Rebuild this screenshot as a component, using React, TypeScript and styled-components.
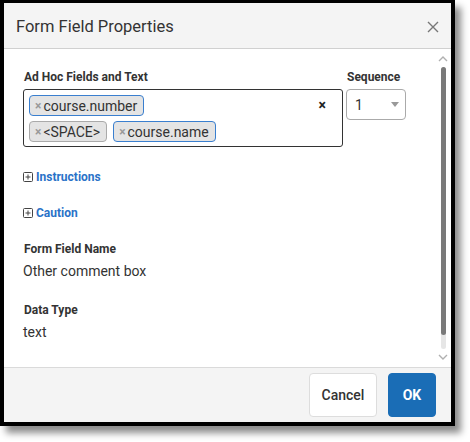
import React from 'react';
import styled, { createGlobalStyle } from 'styled-components';

const GlobalStyle = createGlobalStyle`
  html, body {
    margin: 0;
    padding: 0;
    background: #ffffff;
  }
  body {
    font-family: Roboto, "Liberation Sans", Arial, sans-serif;
    color: #333333;
  }
  * {
    box-sizing: border-box;
  }
`;

type Chip = { label: string; field: boolean };

const chipRows: Chip[][] = [
  [{ label: 'course.number', field: true }],
  [
    { label: '<SPACE>', field: false },
    { label: 'course.name', field: true },
  ],
];

const App: React.FC = () => {
  return (
    <>
      <GlobalStyle />
      <Page>
        <Dialog>
          <Header>
            <Title>Form Field Properties</Title>
            <CloseButton aria-label="Close">
              <svg width="12" height="12" viewBox="0 0 12 12">
                <path d="M1 1 L11 11 M11 1 L1 11" stroke="#777" strokeWidth="1.4" fill="none" />
              </svg>
            </CloseButton>
          </Header>

          <Body>
            <FieldRow>
              <FieldGroup $grow>
                <Label>Ad Hoc Fields and Text</Label>
                <TagInput>
                  {chipRows.map((row, i) => (
                    <ChipRow key={i}>
                      {row.map((chip) => (
                        <ChipItem key={chip.label} $field={chip.field}>
                          <ChipRemove>×</ChipRemove>
                          {chip.label}
                        </ChipItem>
                      ))}
                    </ChipRow>
                  ))}
                  <ClearAll>×</ClearAll>
                </TagInput>
              </FieldGroup>

              <FieldGroup>
                <Label>Sequence</Label>
                <Select>
                  <span>1</span>
                  <Caret />
                </Select>
              </FieldGroup>
            </FieldRow>

            <Toggle $top={23}>
              <PlusBox />
              Instructions
            </Toggle>
            <Toggle $top={22}>
              <PlusBox />
              Caution
            </Toggle>

            <Detail $top={22}>
              <Label>Form Field Name</Label>
              <Value>Other comment box</Value>
            </Detail>
            <Detail $top={24}>
              <Label>Data Type</Label>
              <Value>text</Value>
            </Detail>

            <ScrollBar>
              <Chevron viewBox="0 0 10 6">
                <path d="M1 5 L5 1 L9 5" />
              </Chevron>
              <Track>
                <Thumb />
              </Track>
              <Chevron viewBox="0 0 10 6">
                <path d="M1 1 L5 5 L9 1" />
              </Chevron>
            </ScrollBar>
          </Body>

          <Footer>
            <CancelButton>Cancel</CancelButton>
            <OkButton>OK</OkButton>
          </Footer>
        </Dialog>
      </Page>
    </>
  );
};

const PlusBox: React.FC = () => (
  <svg width="10" height="10" viewBox="0 0 10 10">
    <rect x="0.5" y="0.5" width="9" height="9" rx="1" fill="none" stroke="#444" strokeWidth="1" />
    <path d="M2.5 5 H7.5 M5 2.5 V7.5" stroke="#444" strokeWidth="1" />
  </svg>
);

// Styled Components
const Page = styled.div`
  width: 470px;
  height: 442px;
`;

const Dialog = styled.div`
  width: 455px;
  height: 426px;
  display: flex;
  flex-direction: column;
  border-style: solid;
  border-color: #000;
  border-width: 3px 4px 4px 4px;
  background: #ffffff;
  box-shadow: 6px 7px 7px rgba(0, 0, 0, 0.45);
`;

const Header = styled.div`
  height: 46px;
  flex-shrink: 0;
  display: flex;
  align-items: center;
  justify-content: space-between;
  padding: 1px 12px 0 12px;
  background: #f4f4f4;
  border-bottom: 1px solid #d0d0d0;
`;

const Title = styled.h1`
  margin: 0;
  font-size: 16.5px;
  font-weight: 400;
  color: #333;
`;

const CloseButton = styled.button`
  border: none;
  background: none;
  padding: 0;
  width: 12px;
  height: 12px;
  display: flex;
  margin-top: 1px;
`;

const Body = styled.div`
  position: relative;
  flex: 1;
  padding: 21px 45px 0 19px;
  overflow: hidden;
`;

const FieldRow = styled.div`
  display: flex;
  gap: 3px;
`;

const FieldGroup = styled.div<{ $grow?: boolean }>`
  display: flex;
  flex-direction: column;
  gap: 5px;
  width: ${({ $grow }) => ($grow ? '320px' : '60px')};
`;

const Label = styled.div`
  font-size: 12px;
  font-weight: 700;
  color: #333;
  line-height: 14px;
  padding-left: 1px;
`;

const TagInput = styled.div`
  position: relative;
  display: flex;
  flex-direction: column;
  gap: 5px;
  padding: 5px 5px 4px 5px;
  border: 1px solid #333;
  border-radius: 3px;
  min-height: 57px;
`;

const ChipRow = styled.div`
  display: flex;
  gap: 6px;
`;

const ChipItem = styled.div<{ $field: boolean }>`
  display: inline-flex;
  align-items: center;
  height: 21px;
  padding: 0 6px 0 5px;
  background: #e4e4e4;
  border: 1px solid ${({ $field }) => ($field ? '#3a7fcf' : '#aaaaaa')};
  border-radius: 4px;
  font-size: 14px;
  color: #333;
  white-space: nowrap;
`;

const ChipRemove = styled.span`
  font-size: 12px;
  font-weight: 700;
  color: #999;
  margin-right: 2px;
  line-height: 1;
`;

const ClearAll = styled.span`
  position: absolute;
  top: 8px;
  right: 16px;
  font-size: 14px;
  font-weight: 700;
  color: #222;
  line-height: 14px;
`;

const Select = styled.div`
  position: relative;
  display: flex;
  align-items: center;
  height: 31px;
  padding: 0 8px;
  border: 1px solid #aaa;
  border-radius: 4px;
  font-size: 14px;
  color: #333;
`;

const Caret = styled.span`
  position: absolute;
  right: 6px;
  top: 12px;
  width: 0;
  height: 0;
  border-left: 4px solid transparent;
  border-right: 4px solid transparent;
  border-top: 5px solid #999;
`;

const Toggle = styled.div<{ $top: number }>`
  display: flex;
  align-items: center;
  gap: 3px;
  margin-top: ${({ $top }) => $top}px;
  font-size: 12px;
  font-weight: 700;
  color: #2a72c8;
  line-height: 14px;
`;

const Detail = styled.div<{ $top: number }>`
  display: flex;
  flex-direction: column;
  gap: 7px;
  margin-top: ${({ $top }) => $top}px;
`;

const Value = styled.div`
  font-size: 14px;
  color: #333;
  line-height: 16px;
`;

const ScrollBar = styled.div`
  position: absolute;
  top: 7px;
  right: 2px;
  bottom: 7px;
  width: 12px;
  display: flex;
  flex-direction: column;
  align-items: center;
  gap: 5px;
`;

const Chevron = styled.svg`
  width: 10px;
  height: 6px;
  flex-shrink: 0;
  path {
    fill: none;
    stroke: #b0b0b0;
    stroke-width: 1.4;
  }
`;

const Track = styled.div`
  flex: 1;
  width: 5px;
  border-radius: 3px;
  background: #e6e6e6;
  display: flex;
  flex-direction: column;
`;

const Thumb = styled.div`
  height: 268px;
  width: 5px;
  border-radius: 3px;
  background: #7a7a7a;
`;

const Footer = styled.div`
  height: 55px;
  flex-shrink: 0;
  display: flex;
  align-items: center;
  justify-content: flex-end;
  gap: 11px;
  padding: 0 15px 0 0;
  background: #f4f4f4;
  border-top: 1px solid #dadada;
`;

const BaseButton = styled.button`
  height: 44px;
  border-radius: 4px;
  font-family: Roboto, "Liberation Sans", Arial, sans-serif;
  font-size: 14px;
  cursor: pointer;
`;

const CancelButton = styled(BaseButton)`
  width: 68px;
  background: #ffffff;
  border: 1px solid #dddddd;
  color: #333;
  font-weight: 500;
`;

const OkButton = styled(BaseButton)`
  width: 48px;
  background: #1a6db6;
  border: 1px solid #1a6db6;
  color: #ffffff;
  font-weight: 700;
`;

export default App;
